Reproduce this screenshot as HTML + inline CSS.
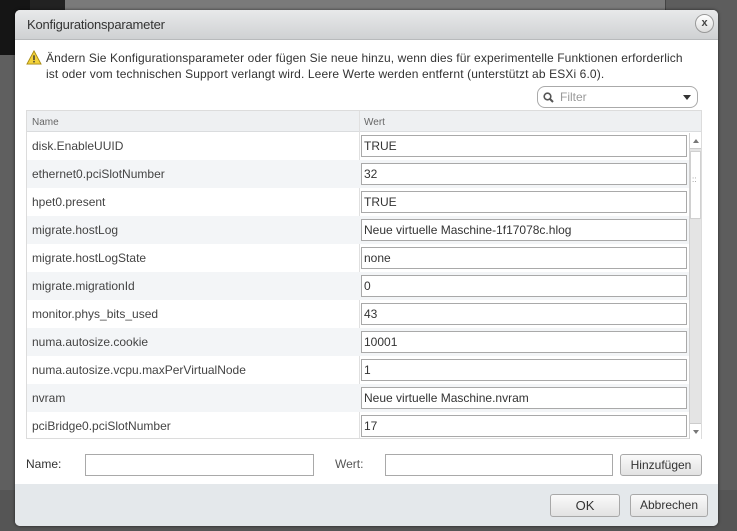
<!DOCTYPE html>
<html><head><meta charset="utf-8"><style>
*{box-sizing:border-box;margin:0;padding:0}
body{width:737px;height:531px;overflow:hidden;position:relative;background:#666;font-family:"Liberation Sans",sans-serif;font-size:12px;color:#333}
.abs{position:absolute}
.dlg{left:15px;top:10px;width:703px;height:516px;background:#fff;border-radius:5px;overflow:hidden;box-shadow:0 0 3px rgba(0,0,0,.6)}
.title{left:0;top:0;width:703px;height:30px;background:linear-gradient(#e8e9ea,#cfd1d3);border-bottom:1px solid #b8babc}
.title span{position:absolute;left:12px;top:7px;font-size:13px;color:#333;letter-spacing:-0.2px}
.close{right:4px;top:4px;width:19px;height:19px;border-radius:50%;border:1px solid #999;background:linear-gradient(#fff,#ddd);text-align:center;font-size:11px;line-height:17px;color:#444;font-weight:bold}
.msg{left:31px;top:40px;width:680px;line-height:16px;font-size:12px;color:#333;letter-spacing:0.12px;white-space:nowrap}
.filter{left:522px;top:76px;width:161px;height:22px;border:1px solid #aaa;border-radius:8px;background:#fff}
.tbl{left:11px;top:100px;width:676px;height:329px;border:1px solid #dcdcdc}
.hdr{left:0;top:0;width:674px;height:21px;background:#eef0f2;border-bottom:1px solid #dadcde;font-size:10px;color:#666}
.row{position:absolute;left:0;width:662px;height:28px}
.row .n{position:absolute;left:5px;top:7px;color:#444}
.row .v{position:absolute;left:334px;top:3px;width:326px;height:22px;border:1px solid #a9a9a9;background:#fff;padding:3px 2px;color:#333}
.col{left:332px;top:0;width:1px;height:327px;background:#e0e0e0}
.sb{left:662px;top:22px;width:12px;height:306px;background:#e4e4e4;border-left:1px solid #d0d0d0}
.btn{border:1px solid #a8a8a8;border-radius:3px;background:linear-gradient(#fafafa,#e2e2e2);text-align:center;color:#333;font-size:12px}
</style></head><body>
<div class="abs" style="left:0;top:0;width:30px;height:55px;background:#151515"></div>
<div class="abs" style="left:30px;top:0;width:35px;height:55px;background:#222"></div>
<div class="abs" style="left:65px;top:0;width:600px;height:10px;background:#7a7a7a"></div>
<div class="abs" style="left:665px;top:0;width:72px;height:531px;background:#5d5d5d;border-left:1px solid #444"></div>
<div class="abs" style="left:0;top:55px;width:15px;height:476px;background:#5f5f5f"></div>
<div class="abs" style="left:0;top:490px;width:737px;height:41px;background:#555"></div>
<div class="abs dlg">
 <div class="abs title"><span>Konfigurationsparameter</span><div class="abs close">x</div></div>
 <svg class="abs" style="left:11px;top:40px" width="16" height="15" viewBox="0 0 18 17"><path d="M9 1L17 16H1Z" fill="#f3d23a" stroke="#a88a10"/><rect x="8.2" y="6" width="1.6" height="5.5" fill="#333"/><rect x="8.2" y="12.5" width="1.6" height="1.6" fill="#333"/></svg>
 <div class="abs msg">Ändern Sie Konfigurationsparameter oder fügen Sie neue hinzu, wenn dies für experimentelle Funktionen erforderlich<br>ist oder vom technischen Support verlangt wird. Leere Werte werden entfernt (unterstützt ab ESXi 6.0).</div>
 <div class="abs filter"><svg class="abs" style="left:5px;top:5px" width="11" height="11"><circle cx="4.5" cy="4.5" r="3.3" fill="none" stroke="#555" stroke-width="1.6"/><path d="M7 7L10 10" stroke="#555" stroke-width="2"/></svg><span class="abs" style="left:22px;top:3px;color:#999;font-size:12px">Filter</span><svg class="abs" style="left:145px;top:8px" width="8" height="5"><path d="M0 0H8L4 5Z" fill="#333"/></svg></div>
 <div class="abs tbl">
  <div class="abs hdr"><span class="abs" style="left:5px;top:6px">Name</span><span class="abs" style="left:337px;top:6px">Wert</span></div>
  <div class="abs col"></div>
  <div class="row" style="top:21px"><span class="n">disk.EnableUUID</span><div class="v">TRUE</div></div>
  <div class="row" style="top:49px;background:#f3f5f7"><span class="n">ethernet0.pciSlotNumber</span><div class="v">32</div></div>
  <div class="row" style="top:77px"><span class="n">hpet0.present</span><div class="v">TRUE</div></div>
  <div class="row" style="top:105px;background:#f3f5f7"><span class="n">migrate.hostLog</span><div class="v">Neue virtuelle Maschine-1f17078c.hlog</div></div>
  <div class="row" style="top:133px"><span class="n">migrate.hostLogState</span><div class="v">none</div></div>
  <div class="row" style="top:161px;background:#f3f5f7"><span class="n">migrate.migrationId</span><div class="v">0</div></div>
  <div class="row" style="top:189px"><span class="n">monitor.phys_bits_used</span><div class="v">43</div></div>
  <div class="row" style="top:217px;background:#f3f5f7"><span class="n">numa.autosize.cookie</span><div class="v">10001</div></div>
  <div class="row" style="top:245px"><span class="n">numa.autosize.vcpu.maxPerVirtualNode</span><div class="v">1</div></div>
  <div class="row" style="top:273px;background:#f3f5f7"><span class="n">nvram</span><div class="v">Neue virtuelle Maschine.nvram</div></div>
  <div class="row" style="top:301px"><span class="n">pciBridge0.pciSlotNumber</span><div class="v">17</div></div>
  <div class="abs sb">
   <div class="abs" style="left:0;top:0;width:11px;height:16px;background:#fff;border-bottom:1px solid #ccc"><svg class="abs" style="left:3px;top:6px" width="6" height="4"><path d="M0 4H6L3 0Z" fill="#777"/></svg></div>
   <div class="abs" style="left:0;top:18px;width:11px;height:68px;background:#fff;border:1px solid #d0d0d0"><span class="abs" style="left:1px;top:26px;font-size:8px;color:#888;line-height:4px">::</span></div>
   <div class="abs" style="left:0;top:290px;width:11px;height:16px;background:#fff;border-top:1px solid #ccc"><svg class="abs" style="left:3px;top:6px" width="6" height="4"><path d="M0 0H6L3 4Z" fill="#777"/></svg></div>
  </div>
 </div>
 <span class="abs" style="left:11px;top:447px;color:#333">Name:</span>
 <div class="abs" style="left:70px;top:444px;width:229px;height:22px;border:1px solid #a9a9a9"></div>
 <span class="abs" style="left:320px;top:447px;color:#555">Wert:</span>
 <div class="abs" style="left:370px;top:444px;width:228px;height:22px;border:1px solid #a9a9a9"></div>
 <div class="abs btn" style="left:605px;top:444px;width:82px;height:22px;line-height:20px">Hinzufügen</div>
 <div class="abs" style="left:0;top:474px;width:703px;height:42px;background:#e4e8eb"></div>
 <div class="abs btn" style="left:535px;top:484px;width:70px;height:23px;line-height:21px;font-size:13px">OK</div>
 <div class="abs btn" style="left:615px;top:484px;width:78px;height:23px;line-height:21px">Abbrechen</div>
</div>
</body></html>
